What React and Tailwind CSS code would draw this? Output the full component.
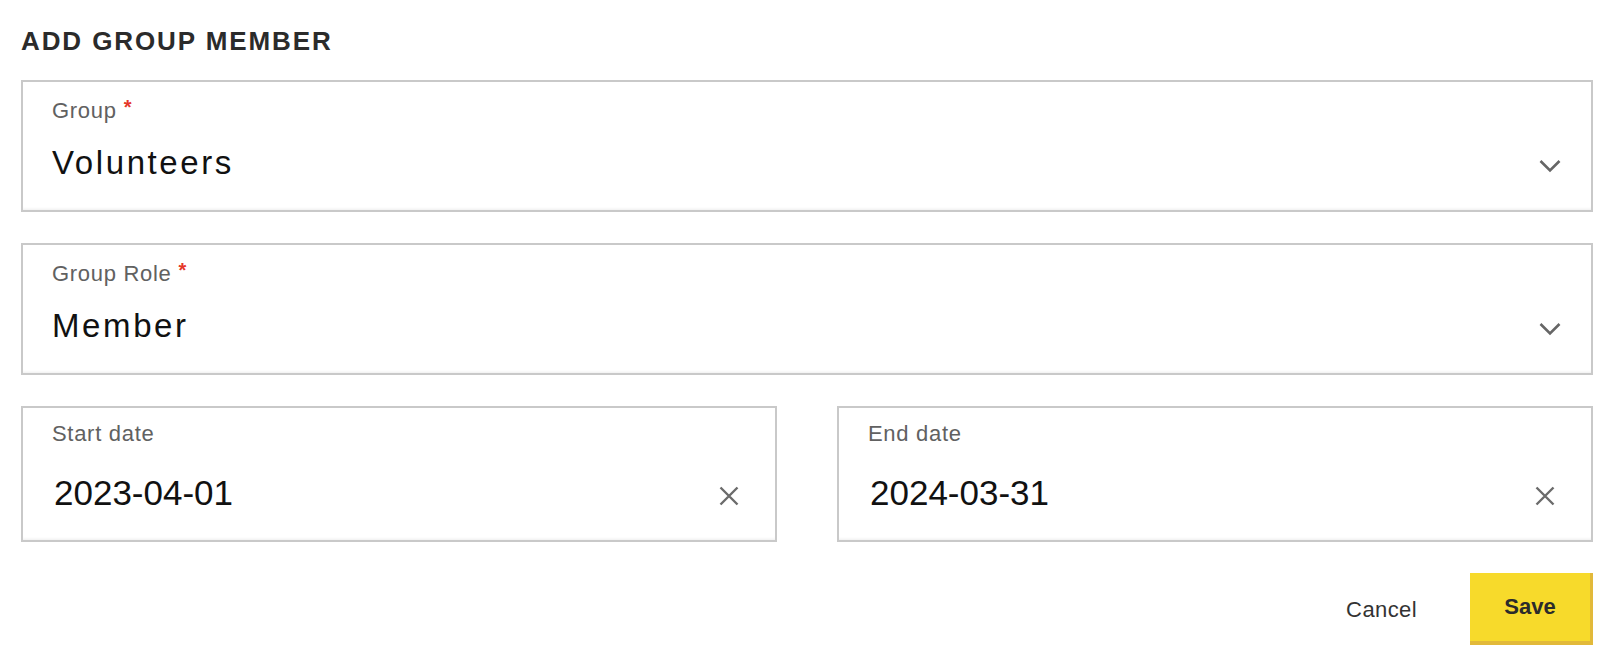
const font = { fontFamily: '"Liberation Sans", Arial, sans-serif' };

function Chevron() {
  return (
    <svg width="24" height="14" viewBox="0 0 24 14" fill="none" className="shrink-0">
      <path d="M2.5 2 L12 11.5 L21.5 2" stroke="#666" strokeWidth="2.6" />
    </svg>
  );
}

function Cross() {
  return (
    <svg width="20" height="20" viewBox="0 0 20 20" fill="none" className="shrink-0">
      <path d="M1.5 1.5 L18.5 18.5 M18.5 1.5 L1.5 18.5" stroke="#6b6b6b" strokeWidth="2.4" />
    </svg>
  );
}

function Label({ children, required }) {
  return (
    <div className="flex h-[24px] items-start text-[22px] leading-[24px] tracking-[0.7px] text-[#616161]">
      <span>{children}</span>
      {required && <span className="ml-[7px] -mt-[1px] text-[20px] font-bold leading-[18px] text-[#e5372a]">*</span>}
    </div>
  );
}

function SelectField({ label, value }) {
  return (
    <div className="flex h-[132px] items-start border-2 border-[#c9c9c9] bg-white pl-[29px] pr-[29px] pt-[17px] shadow-[inset_0_-3px_3px_-2px_rgba(0,0,0,0.07)]">
      <div className="flex-1">
        <Label required>{label}</Label>
        <div className="mt-[20px] h-[40px] text-[33px] leading-[40px] tracking-[2.6px] text-[#111]">{value}</div>
      </div>
      <div className="mt-[60px]">
        <Chevron />
      </div>
    </div>
  );
}

function DateField({ label, value }) {
  return (
    <div className="flex h-[136px] flex-1 items-start border-2 border-[#c9c9c9] bg-white pl-[29px] pr-[36px] pt-[14px] shadow-[inset_0_-3px_3px_-2px_rgba(0,0,0,0.07)]">
      <div className="flex-1">
        <Label>{label}</Label>
        <div className="mt-[27px] h-[40px] pl-[2px] text-[35px] leading-[40px] text-[#111]">{value}</div>
      </div>
      <div className="mt-[64px]">
        <Cross />
      </div>
    </div>
  );
}

export default function App() {
  return (
    <div className="min-h-[666px] bg-white" style={font}>
      <div className="ml-[21px] w-[1572px] pt-[26px]">
        <h1 className="text-[26px] font-bold leading-[30px] tracking-[1.9px] text-[#2b2b2b]">ADD GROUP MEMBER</h1>
        <div className="mt-[24px] flex flex-col gap-[31px]">
          <SelectField label="Group" value="Volunteers" />
          <SelectField label="Group Role" value="Member" />
          <div className="flex gap-[60px]">
            <DateField label="Start date" value="2023-04-01" />
            <DateField label="End date" value="2024-03-31" />
          </div>
        </div>
        <div className="mt-[31px] flex items-center justify-end">
          <button className="mr-[53px] text-[22px] tracking-[0.4px] text-[#333]">Cancel</button>
          <button className="h-[72px] w-[123px] border-b-4 border-r-[3px] border-[#e2b93a] bg-[#f7da2b] pb-[2px] text-[22px] font-bold text-[#2b2b2b]">
            Save
          </button>
        </div>
      </div>
    </div>
  );
}
